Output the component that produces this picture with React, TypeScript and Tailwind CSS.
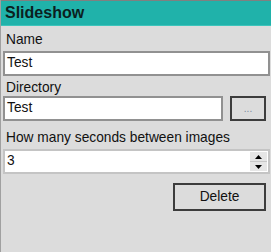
import React from "react";

export default function App() {
  const font = { fontFamily: '"Liberation Sans", Arial, sans-serif' };
  return (
    <div
      style={font}
      className="w-[271px] h-[252px] bg-[#dcdcdc] border-l border-[#a0a0a0] flex flex-col overflow-hidden text-[#111]"
    >
      <div className="h-[26px] shrink-0 border-t border-[#808080] bg-[#20b2aa] border-b border-b-[#3cc4bb] flex items-center pl-[4px]">
        <span className="text-[16px] font-bold leading-none text-[#0b1f1f]">Slideshow</span>
      </div>
      <div className="flex flex-col pl-[2px] pr-[1px]">
        <div className="text-[13.75px] leading-none mt-[7px] pl-[3px] h-[17px]">Name</div>
        <div className="mt-[1px] h-[25px] w-[267px] bg-white border-2 border-[#919191] flex items-center pl-[2px] text-[13.75px]">
          Test
        </div>
        <div className="text-[13.75px] leading-none mt-[5px] pl-[3px] h-[15px]">Directory</div>
        <div className="flex items-center">
          <div className="h-[25px] w-[220px] bg-white border-2 border-[#919191] flex items-center pl-[2px] text-[13.75px]">
            Test
          </div>
          <div className="ml-[7px] h-[25px] w-[36px] border-2 border-[#3c3c3c] flex items-center justify-center text-[10px] text-[#7a8aa0] leading-none">
            ...
          </div>
        </div>
        <div className="text-[13.75px] leading-none mt-[10px] pl-[3px] h-[17px]">How many seconds between images</div>
        <div className="mt-[1px] h-[25px] w-[267px] bg-white border-2 border-[#c4c4c4] flex items-center pl-[2px] text-[13.75px] relative">
          <span>3</span>
          <div className="absolute right-[1px] top-[1px] bottom-[1px] w-[17px] flex flex-col gap-[1px] bg-[#c8c8c8]">
            <div className="flex-1 bg-[#e6e6e6] flex items-center justify-center">
              <svg width="7" height="4" viewBox="0 0 7 4"><polygon points="0,4 7,4 3.5,0" fill="#000" /></svg>
            </div>
            <div className="flex-1 bg-[#e6e6e6] flex items-center justify-center">
              <svg width="7" height="4" viewBox="0 0 7 4"><polygon points="0,0 7,0 3.5,4" fill="#000" /></svg>
            </div>
          </div>
        </div>
        <div className="flex justify-end mt-[9px] pr-[4px]">
          <div className="h-[28px] w-[93px] border-2 border-[#3c3c3c] flex items-center justify-center text-[13.75px]">
            Delete
          </div>
        </div>
      </div>
    </div>
  );
}
